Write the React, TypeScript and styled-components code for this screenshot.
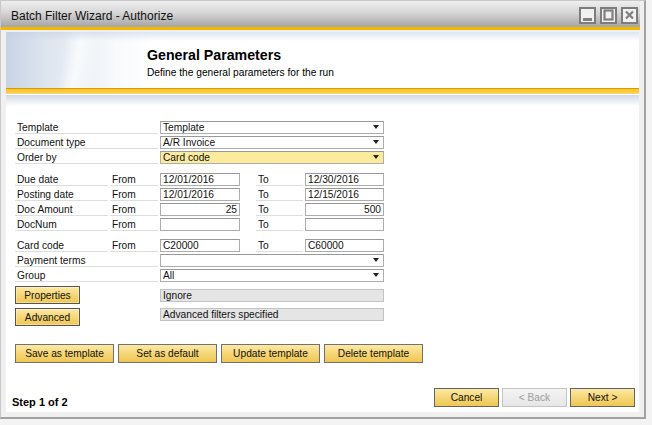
import React from 'react'
import styled, { createGlobalStyle } from 'styled-components'

const GlobalStyle = createGlobalStyle`
  html, body {
    margin: 0;
    padding: 0;
    background: #f3f3f3;
  }
  body {
    font-family: 'Liberation Sans', Arial, sans-serif;
    font-size: 10.2px;
    color: #111;
  }
`

const Minimize = () => (
  <svg width="13" height="13" viewBox="0 0 13 13">
    <rect x="2" y="9" width="9" height="3" fill="#7f7f7f" />
  </svg>
)

const Maximize = () => (
  <svg width="13" height="13" viewBox="0 0 13 13">
    <rect x="2.5" y="1.5" width="8" height="9" fill="none" stroke="#7f7f7f" strokeWidth="2.2" />
  </svg>
)

const Close = () => (
  <svg width="13" height="13" viewBox="0 0 13 13">
    <path d="M3 2.5 L10 9.5 M10 2.5 L3 9.5" stroke="#7f7f7f" strokeWidth="2.2" />
  </svg>
)

const App = (): JSX.Element => {
  return (
    <>
      <GlobalStyle />
      <Window>
        <TitleBar>
          <Caption>Batch Filter Wizard - Authorize</Caption>
          <Controls>
            <ControlBox>
              <Minimize />
            </ControlBox>
            <ControlBox>
              <Maximize />
            </ControlBox>
            <ControlBox>
              <Close />
            </ControlBox>
          </Controls>
        </TitleBar>

        <Frame>
          <Panel>
            <Header>
              <HeaderTitle>General Parameters</HeaderTitle>
              <HeaderSub>Define the general parameters for the run</HeaderSub>
            </Header>
            <GoldBar />
            <Shade />

            <Form>
              <FieldGrid>
                <Label $span={2}>Template</Label>
                <Select $span={3}>Template</Select>
                <Label $span={2}>Document type</Label>
                <Select $span={3}>A/R Invoice</Select>
                <Label $span={2}>Order by</Label>
                <Select $span={3} $bg="#fdeb9d">
                  Card code
                </Select>
              </FieldGrid>

              <FieldGrid $top={9}>
                <Label>Due date</Label>
                <Label>From</Label>
                <Input>12/01/2016</Input>
                <ToLabel>To</ToLabel>
                <Input>12/30/2016</Input>

                <Label>Posting date</Label>
                <Label>From</Label>
                <Input>12/01/2016</Input>
                <ToLabel>To</ToLabel>
                <Input>12/15/2016</Input>

                <Label>Doc Amount</Label>
                <Label>From</Label>
                <Input $align="right">25</Input>
                <ToLabel>To</ToLabel>
                <Input $align="right">500</Input>

                <Label>DocNum</Label>
                <Label>From</Label>
                <Input />
                <ToLabel>To</ToLabel>
                <Input />
              </FieldGrid>

              <FieldGrid $top={8}>
                <Label>Card code</Label>
                <Label>From</Label>
                <Input>C20000</Input>
                <ToLabel>To</ToLabel>
                <Input>C60000</Input>

                <Label $span={2}>Payment terms</Label>
                <Select $span={3} />
                <Label $span={2}>Group</Label>
                <Select $span={3}>All</Select>
              </FieldGrid>

              <ButtonGrid>
                <SmallButton>Properties</SmallButton>
                <ReadOnly>Ignore</ReadOnly>
                <SmallButton>Advanced</SmallButton>
                <ReadOnly $shift={-3}>Advanced filters specified</ReadOnly>
              </ButtonGrid>

              <TemplateRow>
                <TemplateButton>Save as template</TemplateButton>
                <TemplateButton>Set as default</TemplateButton>
                <TemplateButton>Update template</TemplateButton>
                <TemplateButton>Delete template</TemplateButton>
              </TemplateRow>
            </Form>

            <Footer>
              <Step>Step 1 of 2</Step>
              <NavButtons>
                <NavButton>Cancel</NavButton>
                <NavButton disabled>&lt; Back</NavButton>
                <NavButton>Next &gt;</NavButton>
              </NavButtons>
            </Footer>
          </Panel>
        </Frame>
      </Window>
    </>
  )
}

const Window = styled.div`
  width: 646px;
  height: 419px;
  box-sizing: border-box;
  border-top: 1px solid #c8c8c8;
  border-left: 1px solid #c8c8c8;
  border-right: 2px solid #a2a2a2;
  border-bottom: 2px solid #a2a2a2;
  background: #f0f0f0;
  display: flex;
  flex-direction: column;
`

const TitleBar = styled.div`
  box-sizing: border-box;
  height: 29px;
  margin-right: 4px;
  padding: 3px 2px 0 10px;
  display: flex;
  align-items: center;
  justify-content: space-between;
  background: linear-gradient(#efefef, #d6d6d6 45%, #a4a4a4);
  border-bottom: 3px solid #f7b700;
`

const Caption = styled.div`
  font-size: 12px;
  color: #111;
`

const Controls = styled.div`
  display: flex;
  gap: 4px;
`

const ControlBox = styled.div`
  box-sizing: border-box;
  width: 17px;
  height: 17px;
  border: 2px solid #7c7c7c;
  background: #f1f1f1;
  display: flex;
  align-items: center;
  justify-content: center;
`

const Frame = styled.div`
  flex: 1;
  display: flex;
  padding: 2px 5px 5px 5px;
`

const Panel = styled.div`
  flex: 1;
  background: #fff;
  display: flex;
  flex-direction: column;
`

const Header = styled.div`
  height: 56px;
  box-sizing: border-box;
  padding: 15px 0 0 141px;
  background:
    linear-gradient(to bottom, rgba(196, 208, 226, 0.55), rgba(255, 255, 255, 0) 9px),
    linear-gradient(100deg, rgba(255, 255, 255, 0) 60px, rgba(255, 255, 255, 0.7) 75px, rgba(255, 255, 255, 0) 95px),
    linear-gradient(to right, #c7d3e4 0, #dbe3ee 35px, #edf1f6 80px, #f8fafc 110px, #fff 150px);
`

const HeaderTitle = styled.div`
  font-size: 14.2px;
  font-weight: bold;
  line-height: 17px;
  color: #000;
`

const HeaderSub = styled.div`
  margin-top: 2px;
  font-size: 10.2px;
  line-height: 13px;
  color: #000;
`

const GoldBar = styled.div`
  height: 6px;
  background: linear-gradient(#d59c00 0, #d59c00 1px, #ffc52a 1px, #ffcb3a 4px, #f5d98c 6px);
`

const Shade = styled.div`
  height: 12px;
  background: linear-gradient(#fff 0, #fff 1px, #d2dae8 1px, #fff 12px);
`

const Form = styled.div`
  padding: 15px 0 0 9px;
  display: flex;
  flex-direction: column;
`

const FieldGrid = styled.div<{ $top?: number }>`
  display: grid;
  grid-template-columns: 93px 48px 80px 61px 79px;
  grid-auto-rows: 13px;
  column-gap: 2px;
  row-gap: 2px;
  margin-top: ${(p) => p.$top ?? 0}px;
`

const Label = styled.div<{ $span?: number }>`
  grid-column: span ${(p) => p.$span ?? 1};
  box-sizing: border-box;
  padding-left: 2px;
  line-height: 13px;
  border-bottom: 1px solid #dedede;
  white-space: nowrap;
`

const ToLabel = styled(Label)`
  margin-left: 14px;
`

const Input = styled.div<{ $align?: string; $span?: number; $bg?: string }>`
  grid-column: span ${(p) => p.$span ?? 1};
  box-sizing: border-box;
  height: 13px;
  padding: 0 2px;
  line-height: 11px;
  border: 1px solid #adadad;
  border-top-color: #999;
  background: ${(p) => p.$bg ?? '#fff'};
  text-align: ${(p) => p.$align ?? 'left'};
  white-space: nowrap;
  overflow: hidden;
`

const Select = styled(Input)`
  position: relative;

  &::after {
    content: '';
    position: absolute;
    right: 4px;
    top: 3px;
    border-left: 3px solid transparent;
    border-right: 3px solid transparent;
    border-top: 4px solid #222;
  }
`

const ButtonGrid = styled.div`
  display: grid;
  grid-template-columns: 143px 224px;
  grid-auto-rows: 18px;
  column-gap: 2px;
  row-gap: 4px;
  margin-top: 4px;
  align-items: center;
`

const yellowButton = `
  box-sizing: border-box;
  font-family: 'Liberation Sans', Arial, sans-serif;
  font-size: 10.2px;
  color: #111;
  padding: 0;
  border: 1px solid #5e5e5e;
  background: linear-gradient(#fde9a4, #f6d777 50%, #efc752);
  text-align: center;
`

const SmallButton = styled.button`
  ${yellowButton}
  width: 65px;
  height: 18px;
  border-color: #555;
  box-shadow: inset 0 0 0 1px rgba(255, 255, 255, 0.35);
`

const ReadOnly = styled.div<{ $shift?: number }>`
  box-sizing: border-box;
  height: 13px;
  padding: 0 2px;
  line-height: 11px;
  border: 1px solid #c2c2c2;
  background: #e5e5e5;
  white-space: nowrap;
  margin-top: ${(p) => (p.$shift ?? 0) * 2}px;
`

const TemplateRow = styled.div`
  display: flex;
  gap: 4px;
  margin-top: 18px;
`

const TemplateButton = styled.button`
  ${yellowButton}
  width: 99px;
  height: 19px;
  border-color: #707070;
`

const Footer = styled.div`
  margin-top: auto;
  padding: 0 4px 5px 6px;
  display: flex;
  align-items: flex-end;
  justify-content: space-between;
`

const Step = styled.div`
  font-size: 11px;
  font-weight: bold;
  line-height: 13px;
  margin-bottom: -2px;
  color: #000;
`

const NavButtons = styled.div`
  display: flex;
  gap: 3px;
`

const NavButton = styled.button`
  ${yellowButton}
  width: 65px;
  height: 19px;
  border-color: #646464;

  &:disabled {
    color: #9c9c9c;
    border-color: #c4c4c4;
    background: linear-gradient(#f4f4f4, #e6e6e6);
  }
`

export default App
